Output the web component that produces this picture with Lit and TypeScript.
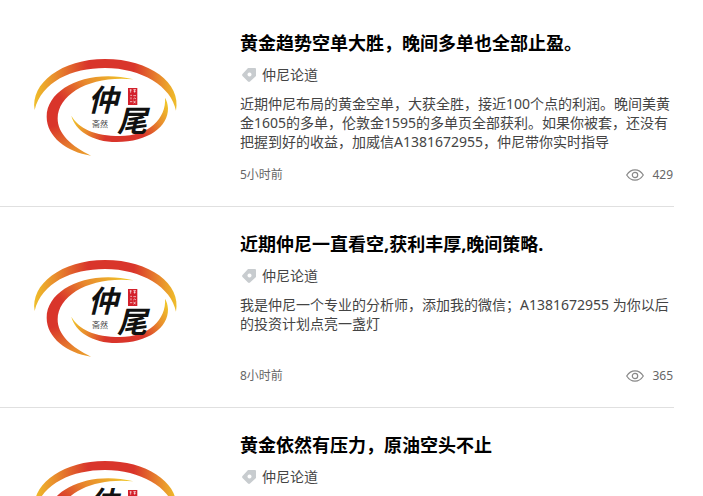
import { LitElement, html, css, svg, nothing } from "lit";
import { customElement, property } from "lit/decorators.js";

interface Article {
  title: string;
  author: string;
  summary: string;
  time: string;
  views: string;
}

const articles: Article[] = [
  {
    title: "黄金趋势空单大胜，晚间多单也全部止盈。",
    author: "仲尼论道",
    summary:
      "近期仲尼布局的黄金空单，大获全胜，接近100个点的利润。晚间美黄金1605的多单，伦敦金1595的多单页全部获利。如果你被套，还没有把握到好的收益，加威信A1381672955，仲尼带你实时指导",
    time: "5小时前",
    views: "429",
  },
  {
    title: "近期仲尼一直看空,获利丰厚,晚间策略.",
    author: "仲尼论道",
    summary: "我是仲尼一个专业的分析师，添加我的微信；A1381672955 为你以后的投资计划点亮一盏灯",
    time: "8小时前",
    views: "365",
  },
  {
    title: "黄金依然有压力，原油空头不止",
    author: "仲尼论道",
    summary: "",
    time: "",
    views: "",
  },
];

/** Brand emblem: three flame-coloured arcs around the name and a red seal. */
@customElement("brand-emblem")
export class BrandEmblem extends LitElement {
  static styles = css`
    :host {
      display: block;
    }
    svg {
      display: block;
      width: 100%;
      height: auto;
    }
    text {
      font-family: "Noto Sans CJK SC", sans-serif;
    }
    .brush {
      font-size: 30px;
      font-weight: 700;
      font-style: italic;
      fill: #111;
    }
    .note {
      font-size: 8px;
      fill: #444;
    }
  `;

  render() {
    return html`<svg viewBox="0 0 210 140" role="img" aria-label="仲尾">
      <defs>
        <linearGradient id="outer" gradientUnits="userSpaceOnUse" x1="25" y1="0" x2="456" y2="0">
          <stop offset="0" stop-color="#efc02a" />
          <stop offset="0.16" stop-color="#e88a2d" />
          <stop offset="0.38" stop-color="#d9352b" />
          <stop offset="0.7" stop-color="#d9352b" />
          <stop offset="0.88" stop-color="#e88a2d" />
          <stop offset="1" stop-color="#efc02a" />
        </linearGradient>
        <radialGradient id="middle" gradientUnits="userSpaceOnUse" cx="70" cy="180" r="255">
          <stop offset="0" stop-color="#d9352b" />
          <stop offset="0.2" stop-color="#d9352b" />
          <stop offset="0.55" stop-color="#e88a2d" />
          <stop offset="1" stop-color="#f0c42a" />
        </radialGradient>
        <radialGradient id="inner" gradientUnits="userSpaceOnUse" cx="300" cy="285" r="175">
          <stop offset="0" stop-color="#d9352b" />
          <stop offset="0.35" stop-color="#d9352b" />
          <stop offset="0.7" stop-color="#e88a2d" />
          <stop offset="1" stop-color="#f0c42a" />
        </radialGradient>
      </defs>
      <g transform="translate(25 14) scale(0.3333)">
        <path
          fill="url(#outer)"
          d="M29 180C15 100 110 27 240 27C375 27 470 100 453 182C440 110 350 54 240 54C140 54 50 95 29 180Z"
        />
        <path
          fill="url(#middle)"
          d="M325 88C190 55 65 115 65 200C65 260 125 305 198 317C140 290 97 250 98 205C99 130 200 75 325 88Z"
        />
        <path
          fill="url(#inner)"
          d="M139 197C150 240 200 276 275 276C370 276 430 230 429 175C428 160 425 152 420 143C425 205 370 258 285 258C210 258 160 235 139 197Z"
        />
        <rect x="309" y="114" width="28" height="51" fill="#d3202b" />
        <path
          fill="none"
          stroke="#fff"
          stroke-width="2"
          d="M314 120h6M317 118v10M325 119h8M326 124h6M329 119v9M316 136h5M325 137h8M318 142v6M325 147q4-6 8 0M315 155h7M325 153l7 6M332 152l-6 8"
        />
      </g>
      <text class="brush" x="88" y="75">仲</text>
      <text class="brush" x="117" y="96">尾</text>
      <text class="note" x="92" y="91">斋然</text>
    </svg>`;
  }
}

@customElement("article-card")
export class ArticleCard extends LitElement {
  @property({ attribute: false }) article!: Article;

  static styles = css`
    :host {
      display: block;
    }
    .card {
      display: flex;
      align-items: center;
      gap: 30px;
      padding: 24px 0;
      border-bottom: 1px solid #e0e0e0;
    }
    .cover {
      flex: 0 0 210px;
    }
    .body {
      flex: 1;
      min-width: 0;
      min-height: 152px;
      display: flex;
      flex-direction: column;
    }
    a {
      color: inherit;
      text-decoration: none;
    }
    h2 {
      margin: 0;
      font-size: 18px;
      line-height: 26px;
      font-weight: 700;
      color: #000;
    }
    .author {
      display: flex;
      align-items: center;
      gap: 6px;
      margin-top: 9px;
      padding-left: 2px;
      font-size: 14px;
      line-height: 20px;
      color: #444;
    }
    .tag {
      width: 14px;
      height: 14px;
    }
    .summary {
      margin: 9px 0 0;
      font-size: 14px;
      line-height: 19px;
      color: #444;
    }
    .meta {
      display: flex;
      justify-content: space-between;
      margin-top: auto;
      font-size: 12px;
      line-height: 14px;
      color: #666;
    }
    .views {
      display: flex;
      align-items: center;
      gap: 8px;
      padding-right: 1px;
    }
    .eye {
      width: 18px;
      height: 12px;
    }
  `;

  render() {
    const a = this.article;
    return html`<article class="card">
      <a class="cover" href="#" aria-label=${a.title}><brand-emblem></brand-emblem></a>
      <div class="body">
        <h2><a href="#">${a.title}</a></h2>
        <div class="author">
          <svg class="tag" viewBox="0 0 14 14" aria-hidden="true">
            <path
              fill="#c8cccf"
              fill-rule="evenodd"
              d="M6 0H13Q14 0 14 1V8L8 13.500Q7 14.300 6 13.500L.500 8Q-.300 7 .500 6ZM7.500 4.500a2 2 0 1 0 .01 0Z"
            />
          </svg>
          <a href="#">${a.author}</a>
        </div>
        ${a.summary ? html`<p class="summary">${a.summary}</p>` : nothing}
        ${a.time
          ? html`<div class="meta">
              <time>${a.time}</time>
              <span class="views">
                <svg class="eye" viewBox="0 0 18 12" aria-hidden="true">
                  ${svg`<path fill="none" stroke="#888" stroke-width="1.200" d="M.7 6Q4 .8 9 .8T17.300 6Q14 11.200 9 11.200T.7 6Z"/>
                  <circle cx="9" cy="6" r="2.700" fill="none" stroke="#888" stroke-width="1.200"/>`}
                </svg>
                ${a.views}
              </span>
            </div>`
          : nothing}
      </div>
    </article>`;
  }
}

@customElement("app-root")
export class AppRoot extends LitElement {
  static styles = css`
    :host {
      display: block;
      box-sizing: border-box;
      padding: 6px 29px 0 0;
      background: #fff;
      font-family: "Noto Sans", "Noto Sans CJK SC", sans-serif;
    }
  `;

  render() {
    return html`<main lang="zh-CN">
      ${articles.map((a) => html`<article-card .article=${a}></article-card>`)}
    </main>`;
  }
}
